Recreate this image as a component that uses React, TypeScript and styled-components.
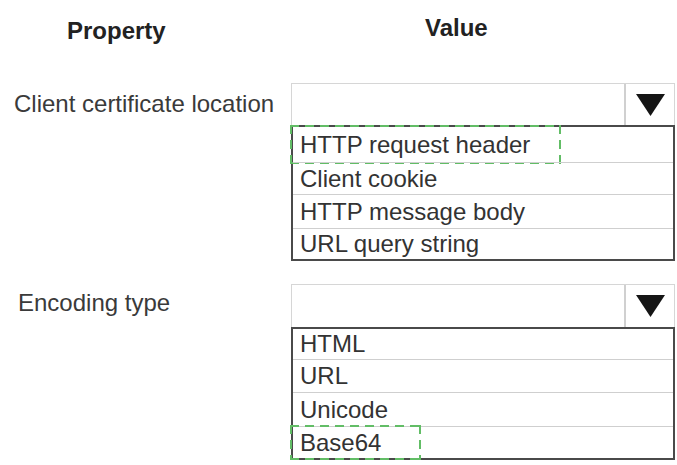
import React from "react";
import styled, { createGlobalStyle } from "styled-components";

const GlobalStyle = createGlobalStyle`
  html, body {
    margin: 0;
    padding: 0;
    background: #ffffff;
  }
  body {
    font-family: "Liberation Sans", Arial, sans-serif;
    color: #333333;
  }
`;

const Page = styled.div`
  width: 677px;
  height: 465px;
  box-sizing: border-box;
  padding: 14px 0 0 0;
  display: flex;
  flex-direction: column;
  overflow: hidden;
`;

const HeaderRow = styled.div`
  display: grid;
  grid-template-columns: 291px 386px;
  height: 69px;
`;

const HeaderCell = styled.div<{ $indent: number; $top: number }>`
  padding-left: ${(p) => p.$indent}px;
  padding-top: ${(p) => p.$top}px;
  font-size: 24px;
  font-weight: bold;
  color: #222222;
  line-height: 28px;
`;

const Section = styled.div<{ $gap: number }>`
  display: grid;
  grid-template-columns: 291px 384px;
  margin-bottom: ${(p) => p.$gap}px;
`;

const Label = styled.div<{ $indent: number; $height: number; $shift: number }>`
  height: ${(p) => p.$height}px;
  padding-left: ${(p) => p.$indent}px;
  display: flex;
  align-items: center;
  font-size: 24px;
  color: #3a3a3a;
  margin-top: ${(p) => p.$shift}px;
  white-space: nowrap;
`;

const Control = styled.div`
  display: flex;
  flex-direction: column;
`;

const Select = styled.div<{ $height: number }>`
  height: ${(p) => p.$height}px;
  box-sizing: border-box;
  border: 1px solid #d6d6d6;
  border-bottom: none;
  display: grid;
  grid-template-columns: 1fr 50px;
  background: #ffffff;
`;

const SelectField = styled.div``;

const ArrowCell = styled.div`
  border-left: 2px solid #d0d0d0;
  display: flex;
  align-items: center;
  justify-content: center;
`;

const OptionList = styled.div`
  border: 2px solid #4a4a4a;
  display: flex;
  flex-direction: column;
`;

const Option = styled.div<{ $height: number }>`
  position: relative;
  height: ${(p) => p.$height}px;
  box-sizing: border-box;
  padding-left: 7px;
  display: flex;
  align-items: center;
  font-size: 24px;
  color: #333333;
  white-space: nowrap;
  & + & {
    border-top: 1px solid #cfcfcf;
  }
`;

const dashH = "repeating-linear-gradient(90deg, #62bd66 0 9px, transparent 9px 15px)";
const dashV = "repeating-linear-gradient(180deg, #62bd66 0 9px, transparent 9px 15px)";

const Highlight = styled.span<{ $width: number }>`
  position: absolute;
  left: -3px;
  top: -2px;
  bottom: -2px;
  width: ${(p) => p.$width}px;
  background:
    ${dashH} left top / 100% 2px no-repeat,
    ${dashH} left bottom / 100% 2px no-repeat,
    ${dashV} left top / 2px 100% no-repeat,
    ${dashV} right top / 2px 100% no-repeat;
  pointer-events: none;
`;

const Arrow = () => (
  <svg width="29" height="22" viewBox="0 0 29 22" aria-hidden="true">
    <polygon points="0,0 29,0 14.5,22" fill="#151515" />
  </svg>
);

type Opt = { text: string; height: number; highlight?: number };

const Dropdown = ({ selectHeight, options }: { selectHeight: number; options: Opt[] }) => (
  <Control>
    <Select $height={selectHeight}>
      <SelectField />
      <ArrowCell>
        <Arrow />
      </ArrowCell>
    </Select>
    <OptionList>
      {options.map((o) => (
        <Option key={o.text} $height={o.height}>
          {o.text}
          {o.highlight ? <Highlight $width={o.highlight} /> : null}
        </Option>
      ))}
    </OptionList>
  </Control>
);

export default function App() {
  return (
    <>
      <GlobalStyle />
      <Page>
        <HeaderRow>
          <HeaderCell $indent={67} $top={3}>Property</HeaderCell>
          <HeaderCell $indent={134} $top={0}>Value</HeaderCell>
        </HeaderRow>
        <Section $gap={23}>
          <Label $indent={14} $height={42} $shift={0}>
            Client certificate location
          </Label>
          <Dropdown
            selectHeight={42}
            options={[
              { text: "HTTP request header", height: 35, highlight: 271 },
              { text: "Client cookie", height: 32 },
              { text: "HTTP message body", height: 34 },
              { text: "URL query string", height: 31 },
            ]}
          />
        </Section>
        <Section $gap={0}>
          <Label $indent={18} $height={42} $shift={-2}>
            Encoding type
          </Label>
          <Dropdown
            selectHeight={43}
            options={[
              { text: "HTML", height: 30 },
              { text: "URL", height: 33 },
              { text: "Unicode", height: 34 },
              { text: "Base64", height: 32, highlight: 131 },
            ]}
          />
        </Section>
      </Page>
    </>
  );
}
